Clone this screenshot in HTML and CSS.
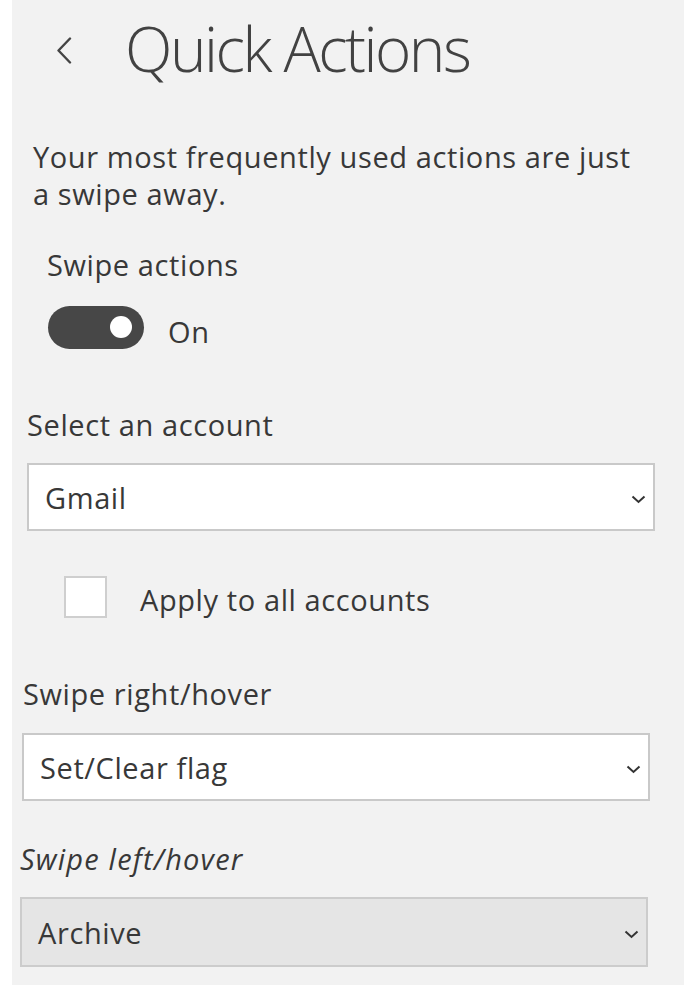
FILE: index.html
```html
<!DOCTYPE html>
<html lang="en">
<head>
<meta charset="utf-8">
<title>Quick Actions</title>
<link rel="stylesheet" href="styles.css">
</head>
<body>
<div class="panel">
  <header class="head">
    <svg class="back" width="16" height="27" viewBox="0 0 16 27" aria-hidden="true"><polyline points="14,1.5 2.5,13.5 14,25.5" fill="none" stroke="#444" stroke-width="2.4" stroke-linecap="round" stroke-linejoin="round"/></svg>
    <h1 class="title">Quick Actions</h1>
  </header>

  <p class="desc">Your most frequently used actions are just a swipe away.</p>

  <div class="label label-swipe">Swipe actions</div>
  <div class="toggle-row">
    <span class="toggle"><span class="knob"></span></span>
    <span class="toggle-text">On</span>
  </div>

  <div class="label label-account">Select an account</div>
  <div class="select select-account">
    <span class="select-text">Gmail</span>
    <svg class="chev" width="15" height="9" viewBox="0 0 15 9" aria-hidden="true"><polyline points="1.5,1.5 7.5,7 13.5,1.5" fill="none" stroke="#333" stroke-width="2"/></svg>
  </div>

  <div class="check-row">
    <span class="checkbox"></span>
    <span class="check-text">Apply to all accounts</span>
  </div>

  <div class="label label-right">Swipe right/hover</div>
  <div class="select select-right">
    <span class="select-text">Set/Clear flag</span>
    <svg class="chev" width="15" height="9" viewBox="0 0 15 9" aria-hidden="true"><polyline points="1.5,1.5 7.5,7 13.5,1.5" fill="none" stroke="#333" stroke-width="2"/></svg>
  </div>

  <div class="label label-left">Swipe left/hover</div>
  <div class="select select-left">
    <span class="select-text">Archive</span>
    <svg class="chev" width="15" height="9" viewBox="0 0 15 9" aria-hidden="true"><polyline points="1.5,1.5 7.5,7 13.5,1.5" fill="none" stroke="#333" stroke-width="2"/></svg>
  </div>
</div>
</body>
</html>
```

FILE: styles.css
```css
html, body {
  margin: 0;
  padding: 0;
  background: #ffffff;
}

body {
  font-family: "Open Sans", "Noto Sans", sans-serif;
  color: #383838;
  font-size: 29px;
  line-height: 37px;
  letter-spacing: 0.6px;
}

.panel {
  margin-left: 12px;
  width: 672px;
  height: 985px;
  background: #f2f2f2;
  padding-top: 12px;
  box-sizing: border-box;
  overflow: hidden;
}

.head {
  display: flex;
  align-items: center;
  height: 72px;
}

.back {
  margin-left: 44px;
  margin-top: 4px;
  flex: none;
}

.title {
  margin: 0 0 0 53px;
  font-weight: 300;
  font-size: 62px;
  line-height: 72px;
  letter-spacing: -2.5px;
  color: #424242;
  white-space: nowrap;
}

.desc {
  margin: 54px 0 0 21px;
  width: 616px;
}

.label {
  height: 37px;
  white-space: nowrap;
}

.label-swipe {
  margin: 34px 0 0 35px;
}

.toggle-row {
  display: flex;
  align-items: center;
  margin: 21px 0 0 36px;
}

.toggle {
  width: 96px;
  height: 43px;
  border-radius: 22px;
  background: #474747;
  display: flex;
  align-items: center;
  justify-content: flex-end;
  padding-right: 12px;
  box-sizing: border-box;
}

.knob {
  width: 22px;
  height: 22px;
  border-radius: 50%;
  background: #ffffff;
}

.toggle-text {
  margin-left: 24px;
  padding-top: 9px;
}

.label-account {
  margin: 56px 0 0 15px;
}

.select {
  display: flex;
  align-items: center;
  justify-content: space-between;
  width: 628px;
  height: 68px;
  box-sizing: border-box;
  border: 2px solid #c9c9c9;
  background: #ffffff;
  padding: 0 7px 0 16px;
}

.select-account {
  margin: 20px 0 0 15px;
}

.chev {
  flex: none;
  margin-top: 4px;
}

.check-row {
  display: flex;
  align-items: center;
  margin: 44px 0 0 52px;
}

.checkbox {
  width: 43px;
  height: 42px;
  box-sizing: border-box;
  border: 2px solid #cfcfcf;
  background: #ffffff;
  flex: none;
}

.check-text {
  margin-left: 33px;
  padding-top: 6px;
}

.label-right {
  margin: 57px 0 0 11px;
}

.select-right {
  margin: 21px 0 0 10px;
}

.label-left {
  margin: 39px 0 0 8px;
  font-style: italic;
  letter-spacing: 1.2px;
}

.select-left {
  margin: 20px 0 0 8px;
  height: 70px;
  background: #e5e5e5;
  border-color: #cccccc;
}
```
